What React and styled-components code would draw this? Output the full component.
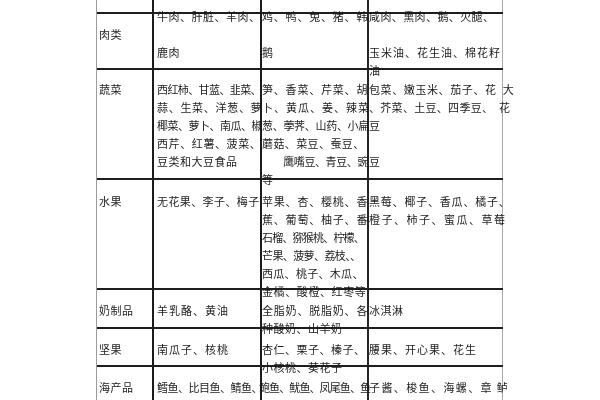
import React from 'react'
import styled, {createGlobalStyle} from 'styled-components'

const GlobalStyle = createGlobalStyle`
  html, body {
    margin: 0;
    padding: 0;
    background: #fff;
  }
  body {
    width: 600px;
    height: 400px;
    overflow: hidden;
    font-family: "Noto Sans CJK SC", "Noto Sans", sans-serif;
  }
`;

// each line: plain string, or [text, letterSpacing]
const rows = [
    {h: 14, shift: 0, cells: [[], [], [], []]},
    {
        h: 56, shift: -7,
        cells: [
            ["", "肉类"],
            ["牛肉、肝脏、羊肉、", "", "鹿肉"],
            [["鸡、鸭、兔、猪、韩", 0.8], "", "鹅"],
            [["咸肉、熏肉、鹅、火腿、", 0.4], "", ["玉米油、花生油、棉花籽", 1], "油"],
        ],
    },
    {
        h: 110, shift: 10,
        cells: [
            ["蔬菜"],
            [["西红柿、甘蓝、韭菜、", -0.6], ["蒜、生菜、洋葱、萝", 0.7], ["椰菜、萝卜、南瓜、椒", -0.5], ["西芹、红薯、菠菜、", 0.6], "豆类和大豆食品"],
            [["笋、香菜、芹菜、胡", 0.8], ["卜、黄瓜、姜、辣菜", 1], ["葱、荸荠、山药、小扁", -0.3], ["蘑菇、菜豆、蚕豆、", 0.4], ["　　鹰嘴豆、青豆、豌", -0.4], "等"],
            [["包菜、嫩玉米、茄子、花  大", 0.6], ["、芥菜、土豆、四季豆、　花", 0.3], "豆", "", "豆"],
        ],
    },
    {
        h: 110, shift: 12,
        cells: [
            ["水果"],
            [["无花果、李子、梅子", 0.4]],
            [["苹果、杏、樱桃、香", 0.8], ["蕉、葡萄、柚子、番", 0.8], ["石榴、猕猴桃、柠檬、", -0.8], ["芒果、菠萝、荔枝、、", -0.6], ["西瓜、桃子、木瓜、", 0.3], ["金橘、酸橙、红枣等", 0.6]],
            [["黑莓、椰子、香瓜、橘子、", 0.8], ["橙子、柿子、蜜瓜、草莓", 1.5]],
        ],
    },
    {
        h: 39, shift: 11,
        cells: [
            ["奶制品"],
            [["羊乳酪、黄油", 1]],
            [["全脂奶、脱脂奶、各", 0.8], "种酸奶、山羊奶"],
            ["冰淇淋"],
        ],
    },
    {
        h: 38, shift: 11,
        cells: [
            ["坚果"],
            [["南瓜子、核桃", 1]],
            ["杏仁、栗子、榛子、", "小核桃、葵花子"],
            [["腰果、开心果、花生", 1]],
        ],
    },
    {
        h: 0, shift: 11,
        cells: [
            ["海产品"],
            [["鳕鱼、比目鱼、鲭鱼、", -0.5], "鱼、鲳鱼、旗鱼、鲱"],
            [["鲍鱼、鱿鱼、凤尾鱼、鱼", -0.9], "鱼、蛤、螃蟹、龙虾、"],
            [["子酱、梭鱼、海螺、章 鲈", 1.4], "鱼、鲑鱼"],
        ],
        nudge: [0, 0, -3, 0],
    },
];

const columns = [
    {pad: 2, edge: "2px solid #1b1b1b"},
    {pad: 3, edge: "2px solid #1b1b1b"},
    {pad: 0, edge: "2px solid #262626"},
    {pad: 0, edge: "1px solid #a9a9a9"},
];

const FoodTable = () => {
    return (
        <Table>
            {rows.map((row, r) => (
                <Row key={r} $h={row.h}>
                    {row.cells.map((lines, c) => (
                        <Cell key={c} $col={c}>
                            <Lines $shift={row.shift} $nudge={row.nudge ? row.nudge[c] : 0}>
                                {lines.map((line, i) => {
                                    const [text, ls] = Array.isArray(line) ? line : [line, 0.5];
                                    return <Line key={i} $ls={ls}>{text}</Line>
                                })}
                            </Lines>
                        </Cell>
                    ))}
                </Row>
            ))}
        </Table>
    );
}

export default function App() {
    return (
        <>
            <GlobalStyle />
            <FoodTable />
        </>
    );
}

const Table = styled.div`
    display : flex;
    flex-direction : column;
    margin-left : 96px;
    width : 407px;
    height : 400px;
    box-sizing : border-box;
    border-left : 1px solid #9c9c9c;
    color : #1c1c1c;
    font-size : 11px;
    filter : blur(0.25px);
`;

const Row = styled.div`
    display : grid;
    grid-template-columns : 57px 108px 107px 134px;
    grid-template-rows : minmax(0, 1fr);
    box-sizing : border-box;
    min-height : 0;
    flex : ${p => p.$h ? `0 0 ${p.$h}px` : "1 1 0"};
    border-bottom : ${p => p.$h ? "2px solid #1e1e1e" : "none"};
`;

const Cell = styled.div`
    box-sizing : border-box;
    min-width : 0;
    min-height : 0;
    padding-left : ${p => columns[p.$col].pad}px;
    border-right : ${p => columns[p.$col].edge};
`;

const Lines = styled.div`
    margin-top : ${p => p.$shift}px;
    margin-left : ${p => p.$nudge}px;
`;

const Line = styled.div`
    height : 18px;
    line-height : 18px;
    white-space : pre;
    letter-spacing : ${p => p.$ls}px;
`;
